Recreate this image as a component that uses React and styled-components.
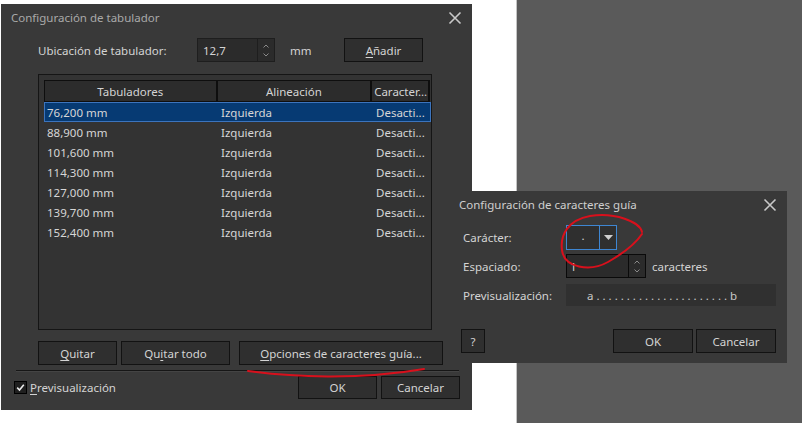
import React from 'react'
import styled, { createGlobalStyle } from 'styled-components'

const GlobalStyle = createGlobalStyle`
  html, body {
    margin: 0;
    padding: 0;
    background: #ffffff;
  }
  body {
    font-family: "Noto Sans", "Open Sans", sans-serif;
    font-size: 11.5px;
  }
`

const Desktop = styled.div`
  position: relative;
  width: 802px;
  height: 423px;
  display: flex;
  overflow: hidden;
`

const WhiteArea = styled.div`
  width: 516px;
  background: #ffffff;
  border-right: 1px solid #c4c4c4;
`

const GrayArea = styled.div`
  flex: 1;
  background: #5a5a5a;
`

const Window = styled.div`
  position: absolute;
  left: ${p => p.$left}px;
  top: ${p => p.$top}px;
  width: ${p => p.$width}px;
  height: ${p => p.$height}px;
  background: #393939;
  color: #d4d4d4;
  display: flex;
  flex-direction: column;
  box-sizing: border-box;
`

const TitleBar = styled.div`
  height: 27px;
  display: flex;
  align-items: center;
  justify-content: space-between;
  padding: 0 10px 0 10px;
  color: ${p => p.$color || '#a9a9a9'};
  flex-shrink: 0;
`

const CloseButton = styled.div`
  width: 14px;
  height: 14px;
  display: flex;
  align-items: center;
  justify-content: center;
`

const Row = styled.div`
  display: flex;
  align-items: center;
  height: ${p => p.$height || 24}px;
  padding-left: ${p => p.$pl || 0}px;
  padding-right: ${p => p.$pr || 0}px;
  margin-top: ${p => p.$mt || 0}px;
  flex-shrink: 0;
`

const Label = styled.span`
  width: ${p => p.$width}px;
  flex-shrink: 0;
  white-space: nowrap;
`

const Spacer = styled.div`
  flex: 1;
`

const Button = styled.div`
  width: ${p => p.$width}px;
  height: ${p => p.$height || 24}px;
  box-sizing: border-box;
  border: 1px solid #121212;
  background: #2f2f2f;
  display: flex;
  align-items: center;
  justify-content: center;
  margin-left: ${p => p.$ml || 0}px;
  flex-shrink: 0;
  white-space: nowrap;
  color: #d4d4d4;
`

const Mn = styled.span`
  text-decoration: underline;
  text-underline-offset: 2px;
`

const SpinBox = styled.div`
  display: flex;
  width: ${p => p.$width}px;
  height: 24px;
  box-sizing: border-box;
  border: 1px solid ${p => (p.$dark ? '#0a0a0a' : '#1e1e1e')};
  background: #2b2b2b;
  flex-shrink: 0;
`

const SpinText = styled.div`
  flex: 1;
  padding-left: ${p => p.$pl || 5}px;
  display: flex;
  align-items: center;
  border-right: 1px solid ${p => (p.$dark ? '#0a0a0a' : '#1e1e1e')};
`

const SpinArrows = styled.div`
  width: 16px;
  display: flex;
  flex-direction: column;
  align-items: center;
  justify-content: center;
  gap: 5px;
`

const Unit = styled.span`
  width: ${p => p.$width}px;
  padding-left: ${p => p.$pl}px;
  box-sizing: border-box;
  white-space: nowrap;
  flex-shrink: 0;
`

const TableFrame = styled.div`
  margin: 12px 0 0 37px;
  width: 394px;
  height: 256px;
  box-sizing: border-box;
  border: 1px solid #151515;
  background: #333333;
  padding: 5px 1px 0 5px;
  flex-shrink: 0;
`

const HeaderRow = styled.div`
  display: flex;
  height: 22px;
`

const HeaderCell = styled.div`
  width: ${p => p.$width}px;
  box-sizing: border-box;
  border: 1px solid #0e0e0e;
  border-left-width: ${p => (p.$first ? 1 : 0)}px;
  border-right-width: 2px;
  background: #2c2c2c;
  display: flex;
  align-items: center;
  justify-content: ${p => (p.$left ? 'flex-start' : 'center')};
  padding-left: ${p => (p.$left ? 2 : 0)}px;
  white-space: nowrap;
  overflow: hidden;
`

const DataRow = styled.div`
  display: flex;
  height: 20px;
  box-sizing: border-box;
  width: 387px;
  background: ${p => (p.$selected ? '#063a73' : 'transparent')};
  border: 1px solid ${p => (p.$selected ? '#3c74bd' : 'transparent')};
  color: #d6d6d6;
`

const DataCell = styled.div`
  width: ${p => p.$width}px;
  padding-left: 2px;
  box-sizing: border-box;
  display: flex;
  align-items: center;
  white-space: nowrap;
  overflow: hidden;
`

const Separator = styled.div`
  margin: 5px 13px 0 15px;
  height: 1px;
  background: #161616;
  border-bottom: 1px solid #444;
  flex-shrink: 0;
`

const CheckBox = styled.div`
  width: 13px;
  height: 13px;
  box-sizing: border-box;
  border: 1px solid #000000;
  background: #1f1f1f;
  display: flex;
  align-items: center;
  justify-content: center;
  margin-right: 3px;
  flex-shrink: 0;
`

const Combo = styled.div`
  display: flex;
  width: 51px;
  height: 25px;
  box-sizing: border-box;
  border: 1px solid #3e86d2;
  background: #2f2f2f;
`

const ComboText = styled.div`
  width: 33px;
  border-right: 1px solid #3e86d2;
  display: flex;
  align-items: center;
  justify-content: center;
  padding-bottom: 4px;
  box-sizing: border-box;
`

const ComboArrow = styled.div`
  flex: 1;
  display: flex;
  align-items: center;
  justify-content: center;
`

const PreviewBox = styled.div`
  width: 210px;
  height: 22px;
  background: #303030;
  display: flex;
  align-items: center;
  padding: 0 8px 0 21px;
  box-sizing: border-box;
  color: #c8c8c8;
  white-space: nowrap;
`

const Overlay = styled.svg`
  position: absolute;
  left: 0;
  top: 0;
  pointer-events: none;
`

const CloseIcon = () => (
  <svg width="14" height="14" viewBox="0 0 14 14">
    <path d="M1.5 1.5 L12.5 12.5 M12.5 1.5 L1.5 12.5" stroke="#c9c9c9" strokeWidth="1.6" />
  </svg>
)

const SpinIcon = () => (
  <>
    <svg width="6" height="4" viewBox="0 0 6 4">
      <path d="M0.5 3.5 L3 1 L5.5 3.5" fill="none" stroke="#8a8a8a" strokeWidth="1" />
    </svg>
    <svg width="6" height="4" viewBox="0 0 6 4">
      <path d="M0.5 0.5 L3 3 L5.5 0.5" fill="none" stroke="#8a8a8a" strokeWidth="1" />
    </svg>
  </>
)

const tabs = ['76,200 mm', '88,900 mm', '101,600 mm', '114,300 mm', '127,000 mm', '139,700 mm', '152,400 mm']

const TabDialog = () => (
  <Window $left={1} $top={4} $width={471} $height={406}>
    <TitleBar>
      <span>Configuración de tabulador</span>
      <CloseButton><CloseIcon /></CloseButton>
    </TitleBar>
    <Row $mt={7} $pl={37}>
      <Label $width={159}>Ubicación de tabulador:</Label>
      <SpinBox $width={78}>
        <SpinText>12,7</SpinText>
        <SpinArrows><SpinIcon /></SpinArrows>
      </SpinBox>
      <Unit $width={69} $pl={15}>mm</Unit>
      <Button $width={79}><span><Mn>A</Mn>ñadir</span></Button>
    </Row>
    <TableFrame>
      <HeaderRow>
        <HeaderCell $width={174} $first>Tabuladores</HeaderCell>
        <HeaderCell $width={155}>Alineación</HeaderCell>
        <HeaderCell $width={58} $left>Caracter...</HeaderCell>
      </HeaderRow>
      {tabs.map((t, i) => (
        <DataRow key={t} $selected={i === 0}>
          <DataCell $width={174}>{t}</DataCell>
          <DataCell $width={155}>Izquierda</DataCell>
          <DataCell $width={56}>Desacti...</DataCell>
        </DataRow>
      ))}
    </TableFrame>
    <Row $mt={11} $pl={37}>
      <Button $width={79}><span><Mn>Q</Mn>uitar</span></Button>
      <Button $width={109} $ml={4}><span>Qu<Mn>i</Mn>tar todo</span></Button>
      <Button $width={204} $ml={9}><span><Mn>O</Mn>pciones de caracteres guía...</span></Button>
    </Row>
    <Separator />
    <Row $mt={4} $pl={13} $pr={12} $height={23}>
      <CheckBox>
        <svg width="9" height="9" viewBox="0 0 9 9">
          <path d="M1.2 4.6 L3.5 7 L7.8 1.8" fill="none" stroke="#ececec" strokeWidth="1.6" />
        </svg>
      </CheckBox>
      <span><Mn>P</Mn>revisualización</span>
      <Spacer />
      <Button $width={79} $height={23}>OK</Button>
      <Button $width={79} $height={23} $ml={4}>Cancelar</Button>
    </Row>
  </Window>
)

const GuideDialog = () => (
  <Window $left={449} $top={191} $width={338} $height={172}>
    <TitleBar $color="#cfcfcf">
      <span>Configuración de caracteres guía</span>
      <CloseButton><CloseIcon /></CloseButton>
    </TitleBar>
    <Row $mt={7} $pl={14} $height={25}>
      <Label $width={103}>Carácter:</Label>
      <Combo>
        <ComboText>.</ComboText>
        <ComboArrow>
          <svg width="9" height="5" viewBox="0 0 9 5">
            <path d="M0 0 L9 0 L4.5 5 Z" fill="#cfcfcf" />
          </svg>
        </ComboArrow>
      </Combo>
    </Row>
    <Row $mt={4} $pl={14}>
      <Label $width={103}>Espaciado:</Label>
      <SpinBox $width={80} $dark>
        <SpinText $pl={3} $dark>1</SpinText>
        <SpinArrows><SpinIcon /></SpinArrows>
      </SpinBox>
      <Unit $width={70} $pl={6}>caracteres</Unit>
    </Row>
    <Row $mt={6} $pl={14} $height={22}>
      <Label $width={103}>Previsualización:</Label>
      <PreviewBox>a . . . . . . . . . . . . . . . . . . . . . . b</PreviewBox>
    </Row>
    <Row $mt={23} $pl={12} $pr={11} $height={24}>
      <Button $width={24}>?</Button>
      <Spacer />
      <Button $width={80}>OK</Button>
      <Button $width={80} $ml={3}>Cancelar</Button>
    </Row>
  </Window>
)

export default function App() {
  return (
    <Desktop>
      <GlobalStyle />
      <WhiteArea />
      <GrayArea />
      <TabDialog />
      <GuideDialog />
      <Overlay width="802" height="423" viewBox="0 0 802 423">
        <path
          d="M248 371 C 290 377, 360 380, 424 369"
          fill="none"
          stroke="#d8101c"
          strokeWidth="2"
          strokeLinecap="round"
        />
        <path
          d="M642 232 C 640 222, 615 212, 590 216 C 568 220, 560 235, 562 250 C 564 268, 590 272, 608 262 C 622 254, 634 246, 642 234"
          fill="none"
          stroke="#d8101c"
          strokeWidth="2"
          strokeLinecap="round"
        />
      </Overlay>
    </Desktop>
  )
}
